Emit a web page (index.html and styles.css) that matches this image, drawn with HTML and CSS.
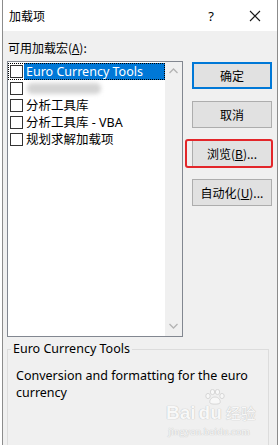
FILE: index.html
```html
<!DOCTYPE html>
<html lang="zh-CN">
<head>
    <meta charset="UTF-8">
    <title>加载项</title>
    <link rel="stylesheet" href="styles.css">
</head>
<body>
    <div class="window">
        <!-- title bar -->
        <div class="titlebar">
            <span class="title">加载项</span>
            <span class="help">?</span>
            <svg class="close" width="12" height="12" viewBox="0 0 12 12">
                <path d="M1 1 L11 11 M11 1 L1 11" stroke="#1a1a1a" stroke-width="1.1" fill="none"/>
            </svg>
        </div>

        <div class="content">
            <div class="caption">可用加载宏(<u>A</u>):</div>

            <div class="main">
                <div class="listbox">
                    <ul class="items">
                        <li class="item focus"><span class="check"></span><span class="label selected">Euro Currency Tools</span></li>
                        <li class="item"><span class="check"></span><span class="smudge"></span></li>
                        <li class="item"><span class="check"></span><span class="label">分析工具库</span></li>
                        <li class="item"><span class="check"></span><span class="label">分析工具库 - VBA</span></li>
                        <li class="item"><span class="check"></span><span class="label">规划求解加载项</span></li>
                    </ul>
                    <div class="scrollbar">
                        <svg width="9" height="6" viewBox="0 0 9 6"><path d="M0.5 5 L4.5 1 L8.5 5" stroke="#b4b4b4" stroke-width="1.3" fill="none"/></svg>
                        <svg width="9" height="6" viewBox="0 0 9 6"><path d="M0.5 1 L4.5 5 L8.5 1" stroke="#b4b4b4" stroke-width="1.3" fill="none"/></svg>
                    </div>
                </div>

                <div class="buttons">
                    <button class="btn default">确定</button>
                    <button class="btn">取消</button>
                    <div class="marked">
                        <button class="btn">浏览(<u>B</u>)...</button>
                        <span class="ring"></span>
                    </div>
                    <button class="btn">自动化(<u>U</u>)...</button>
                </div>
            </div>

            <fieldset class="details">
                <legend>Euro Currency Tools</legend>
                <p>Conversion and formatting for the euro currency</p>
            </fieldset>
        </div>

        <!-- watermark -->
        <svg class="paw-icon" width="20" height="16" viewBox="0 0 20 16">
            <g fill="#f8f8f8" stroke="#cfcfcf" stroke-width="0.8">
                <ellipse cx="3" cy="7" rx="2.2" ry="2.6"/>
                <ellipse cx="7.5" cy="3" rx="2.2" ry="2.6"/>
                <ellipse cx="12.5" cy="3" rx="2.2" ry="2.6"/>
                <ellipse cx="17" cy="7" rx="2.2" ry="2.6"/>
                <path d="M10 8 C6 8 4 12 5 14 C6 15.5 14 15.5 15 14 C16 12 14 8 10 8 Z"/>
            </g>
        </svg>
        <div class="watermark">
            <div class="mark-top"><span>Bai</span><span class="du">du</span><span class="cn">经验</span></div>
            <div class="mark-url">jingyan.baidu.com</div>
        </div>
    </div>
</body>
</html>
```

FILE: styles.css
```css
body {
    margin: 0;
    width: 280px;
    height: 445px;
    overflow: hidden;
    background-color: #ffffff;
    font-family: "Noto Sans", "Noto Sans CJK SC", sans-serif;
    font-size: 12px;
    color: #000000;
}

.window {
    position: relative;
    margin-left: 2px;
    width: 274px;
    height: 445px;
    border-left: 1px solid #8c8c8c;
    border-right: 1px solid #8c8c8c;
    background-color: #f0f0f0;
}

.titlebar {
    display: flex;
    align-items: center;
    height: 31px;
    background-color: #ffffff;
}
.title {
    margin-left: 6px;
    font-family: "Noto Sans CJK SC", sans-serif;
    font-size: 12px;
}
.help {
    margin-left: auto;
    font-size: 13px;
    margin-right: 35px;
}
.close {
    margin-right: 16px;
}

.content {
    padding-left: 4px;
}

.caption {
    height: 16px;
    line-height: 16px;
    margin-top: 9px;
    margin-left: 1px;
    font-family: "Noto Sans CJK SC", sans-serif;
}

.main {
    display: flex;
    margin-top: 5px;
}

.listbox {
    display: flex;
    width: 174px;
    height: 274px;
    border: 1px solid #828790;
    background-color: #ffffff;
}
.items {
    flex: 1;
    list-style: none;
    margin: 0;
    padding: 1px 0 0 0;
}
.item {
    display: flex;
    align-items: center;
    height: 17px;
    box-sizing: border-box;
}
.item.focus {
    outline: 1px dotted #000000;
    outline-offset: -1px;
}
.check {
    width: 11px;
    height: 11px;
    border: 1px solid #333333;
    margin-left: 2px;
    margin-right: 1px;
    background-color: #ffffff;
}
.label {
    flex: 1;
    height: 17px;
    line-height: 17px;
    padding-left: 2px;
    white-space: nowrap;
    font-size: 12.5px;
}
.label.selected {
    background-color: #0078d7;
    color: #ffffff;
}
.smudge {
    width: 74px;
    height: 11px;
    margin-left: 3px;
    border-radius: 5px;
    background-color: #d4d4d4;
    filter: blur(2px);
}

.scrollbar {
    display: flex;
    flex-direction: column;
    justify-content: space-between;
    align-items: center;
    width: 17px;
    padding: 6px 0 7px 0;
    background-color: #f0f0f0;
}

.buttons {
    display: flex;
    flex-direction: column;
    gap: 12px;
    margin-left: 9px;
    padding-top: 1px;
}
.btn {
    width: 80px;
    height: 27px;
    padding: 0;
    border: 1px solid #adadad;
    background-color: #e1e1e1;
    font-family: "Noto Sans CJK SC", sans-serif;
    font-size: 12px;
    color: #000000;
}
.btn.default {
    border: 2px solid #0078d7;
}
.marked {
    position: relative;
    height: 27px;
}
.ring {
    position: absolute;
    left: -7px;
    top: -1px;
    right: -1px;
    bottom: -1px;
    border: 2px solid #e3262a;
    border-radius: 3px;
}

.details {
    margin: 4px 0 0 0;
    width: 262px;
    height: 120px;
    padding: 0 0 0 3px;
    border: 1px solid #dcdcdc;
    box-sizing: border-box;
}
.details legend {
    padding: 0 2px;
    line-height: 16px;
    font-size: 12.5px;
}
.details p {
    margin: 10px 0 0 5px;
    line-height: 17px;
    font-size: 12.5px;
    width: 240px;
}

.paw-icon {
    position: absolute;
    left: 202px;
    top: 389px;
}
.watermark {
    position: absolute;
    left: 163px;
    top: 403px;
    color: #f8f8f8;
    text-shadow: 0 0 1px #c4c4c4, 0 0 1px #c4c4c4;
    font-family: "Liberation Sans", sans-serif;
}
.mark-top {
    display: flex;
    align-items: flex-end;
    font-size: 19px;
    font-weight: bold;
    line-height: 19px;
}
.du {
    margin-left: 3px;
}
.cn {
    margin-left: 4px;
    font-family: "Noto Sans CJK SC", sans-serif;
    font-size: 15px;
    line-height: 19px;
    font-weight: normal;
}
.mark-url {
    font-family: "Liberation Serif", serif;
    font-size: 11px;
    line-height: 13px;
    margin-top: 3px;
    margin-left: 2px;
}
```
